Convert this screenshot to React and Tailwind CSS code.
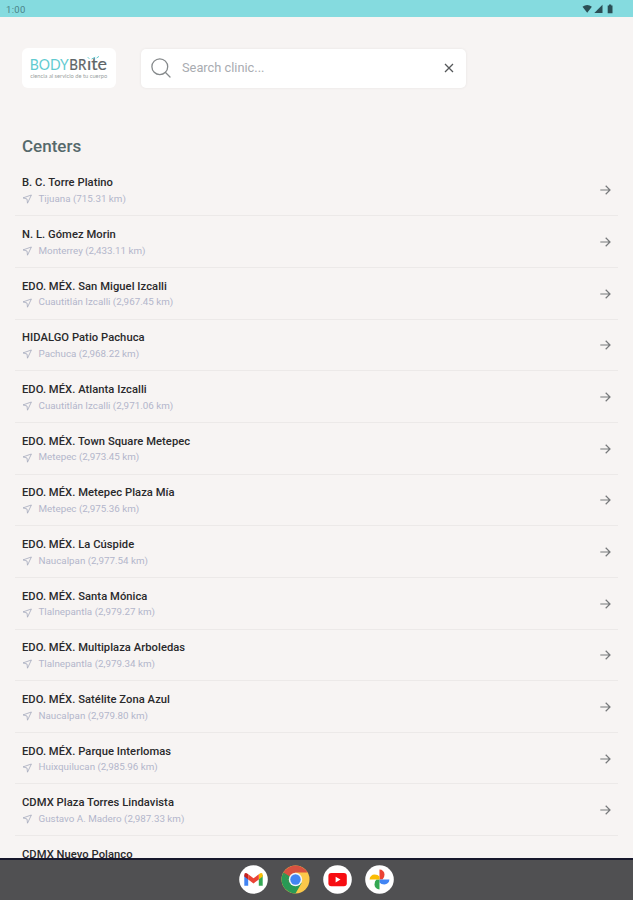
import React from "react";

const centers = [
  ["B. C. Torre Platino", "Tijuana (715.31 km)"],
  ["N. L. Gómez Morin", "Monterrey (2,433.11 km)"],
  ["EDO. MÉX. San Miguel Izcalli", "Cuautitlán Izcalli (2,967.45 km)"],
  ["HIDALGO Patio Pachuca", "Pachuca (2,968.22 km)"],
  ["EDO. MÉX. Atlanta Izcalli", "Cuautitlán Izcalli (2,971.06 km)"],
  ["EDO. MÉX. Town Square Metepec", "Metepec (2,973.45 km)"],
  ["EDO. MÉX. Metepec Plaza Mía", "Metepec (2,975.36 km)"],
  ["EDO. MÉX. La Cúspide", "Naucalpan (2,977.54 km)"],
  ["EDO. MÉX. Santa Mónica", "Tlalnepantla (2,979.27 km)"],
  ["EDO. MÉX. Multiplaza Arboledas", "Tlalnepantla (2,979.34 km)"],
  ["EDO. MÉX. Satélite Zona Azul", "Naucalpan (2,979.80 km)"],
  ["EDO. MÉX. Parque Interlomas", "Huixquilucan (2,985.96 km)"],
  ["CDMX Plaza Torres Lindavista", "Gustavo A. Madero (2,987.33 km)"],
];

function StatusBar() {
  return (
    <header className="flex h-[17px] shrink-0 items-center justify-between bg-[#85dbdf] pr-[18px] pl-1.5 text-[#2b4e55]">
      <span className="pt-0.5 text-[9.5px] leading-none tracking-[0.3px] text-[#4b8388]">1:00</span>
      <svg className="mt-px h-[10px] w-[33px]" viewBox="0 0 33 10" fill="currentColor">
        <path d="M0.5 2.7Q5.2-.6 9.9 2.7L5.2 8.8Z" />
        <path d="M20.5 0.8V9H12.3Z" />
        <path d="M25.7 1.5h1.3V.4h2.2v1.1h1.3V9.2h-4.8Z" />
      </svg>
    </header>
  );
}

function Logo() {
  return (
    <div className="flex h-10 w-[94px] items-center justify-center rounded-md bg-white">
      <svg className="h-10 w-[94px]" viewBox="0 0 94 40">
        <g fontFamily="Lato, sans-serif" fontSize="14.6">
          <text x="7.8" y="22.3" fill="#62cbd0" textLength="39" lengthAdjust="spacingAndGlyphs">BODY</text>
          <text x="47.3" y="22.3" fill="#5e6568" stroke="#5e6568" strokeWidth="0.2" textLength="17" lengthAdjust="spacingAndGlyphs">BR</text>
          <text x="65" y="22.3" fill="#5e6568" stroke="#5e6568" strokeWidth="0.2" fontSize="17" textLength="20" lengthAdjust="spacingAndGlyphs">ıte</text>
        </g>
        <path d="M65.8 9.2l1.5 1.6M69.6 11l3.6-1.8M74.6 10l2.4-1.6" stroke="#62cbd0" strokeWidth="1" />
        <text x="8.2" y="30.3" fill="#9a9fa1" fontFamily="Lato, sans-serif" fontSize="5.3" textLength="77" lengthAdjust="spacingAndGlyphs">ciencia al servicio de tu cuerpo</text>
      </svg>
    </div>
  );
}

function SearchBox() {
  return (
    <div className="flex h-[39px] w-[325px] items-center rounded-[5px] bg-white pr-3 pl-[10px] shadow-[0_0_3px_rgba(0,0,0,0.07)]">
      <svg className="size-5 shrink-0" viewBox="0 0 20 20" fill="none" stroke="#85898b" strokeWidth="1.3" strokeLinecap="round">
        <circle cx="8.8" cy="8.7" r="7.9" />
        <path d="M14.5 14.5L19 19" />
      </svg>
      <span className="ml-[11px] flex-1 text-[12.8px] text-[#a9acb1]">Search clinic...</span>
      <svg className="size-[10px]" viewBox="0 0 10 10" fill="none" stroke="#55585a" strokeWidth="1.3">
        <path d="M1 1L9 9M9 1L1 9" />
      </svg>
    </div>
  );
}

function CenterName({ children }) {
  return (
    <div className="text-[11.2px] leading-4 font-medium tracking-[0.05px] whitespace-nowrap text-[#29292b]">
      {children}
    </div>
  );
}

function CenterRow({ name, place }) {
  return (
    <li className="flex h-[51.67px] shrink-0 items-center justify-between border-b border-[#ece9e8] px-[7px]">
      <div className="pt-[3px]">
        <CenterName>{name}</CenterName>
        <div className="flex h-4 items-center text-[9.8px] whitespace-nowrap text-[#b3b6cb]">
          <svg className="mr-[6.5px] size-[10px]" viewBox="0 0 10 10" fill="none" stroke="#a5aabd" strokeWidth="0.8" strokeLinejoin="round">
            <path d="M9.4 1L1 3.9L5 5L5.5 9.2Z" />
          </svg>
          {place}
        </div>
      </div>
      <svg className="mt-px h-[10px] w-[11px]" viewBox="0 0 11 10" fill="none" stroke="#77797b" strokeWidth="1.2">
        <path d="M0.3 5H10M5.7 0.8L10 5L5.7 9.2" />
      </svg>
    </li>
  );
}

function Gmail() {
  return (
    <svg className="size-[29px]" viewBox="0 0 29 29">
      <circle cx="14.5" cy="14.5" r="14.3" fill="#fff" />
      <path d="M5.3 9.8V20.8H9.2V12.5Z" fill="#4285f4" />
      <path d="M23.7 9.8V20.8H19.8V12.5Z" fill="#34a853" />
      <path d="M19.8 9.3L21.2 8.3Q23.7 7.3 23.7 10V11.4L19.8 14.4Z" fill="#fbbc04" />
      <path d="M9.2 9.3L7.8 8.3Q5.3 7.3 5.3 10V11.4L9.2 14.4Z" fill="#c5221f" />
      <path d="M9.2 9.3L14.5 13.3L19.8 9.3V14.4L14.5 18.4L9.2 14.4Z" fill="#ea4335" />
    </svg>
  );
}

function Chrome() {
  return (
    <svg className="size-[29px]" viewBox="0 0 29 29">
      <circle cx="14.5" cy="14.5" r="14" fill="#fbc84a" />
      <path d="M2.4 7.5A14 14 0 0 0 14.5 28.5L20.6 18L14.5 14.5Z" fill="#299a55" />
      <path d="M2.4 7.5A14 14 0 0 1 26.6 7.5H14.5L8.4 18Z" fill="#d85140" />
      <path d="M2.4 7.5L8.4 18L14.5 14.5L8 11Z" fill="#299a55" />
      <circle cx="14.5" cy="14.5" r="6.7" fill="#f1f5fa" />
      <circle cx="14.5" cy="14.5" r="5.2" fill="#4285f4" />
    </svg>
  );
}

function YouTube() {
  return (
    <svg className="size-[29px]" viewBox="0 0 29 29">
      <circle cx="14.5" cy="14.5" r="14.3" fill="#fff" />
      <rect x="5.4" y="8" width="18.4" height="13.2" rx="3" fill="#f70d12" />
      <path d="M12.6 11.7L17.5 14.6L12.6 17.5Z" fill="#fff" />
    </svg>
  );
}

function Photos() {
  return (
    <svg className="size-[29px]" viewBox="0 0 29 29">
      <circle cx="14.5" cy="14.5" r="14.3" fill="#fff" />
      <path d="M14.5 14.5V4.6A5 5 0 0 1 19.5 9.6Q19.5 13 17.5 14.5Z" fill="#ea4335" />
      <path d="M14.5 14.5H24.4A5 5 0 0 1 19.4 19.5Q16 19.5 14.5 17.5Z" fill="#4285f4" />
      <path d="M14.5 14.5V24.4A5 5 0 0 1 9.5 19.4Q9.5 16 11.5 14.5Z" fill="#34a853" />
      <path d="M14.5 14.5H4.6A5 5 0 0 1 9.6 9.5Q13 9.5 14.5 11.5Z" fill="#fbbc04" />
    </svg>
  );
}

export default function App() {
  return (
    <div className="flex h-[900px] w-[633px] flex-col overflow-hidden bg-[#f7f4f3] font-[Roboto,sans-serif]">
      <StatusBar />
      <main className="flex min-h-0 flex-1 flex-col overflow-hidden">
        <div className="flex shrink-0 items-center gap-[25px] pt-[31px] pl-[22px]">
          <Logo />
          <SearchBox />
        </div>
        <h1 className="mt-[46px] shrink-0 pl-[22px] text-[17px] leading-6 font-medium text-[#56696b]">Centers</h1>
        <ul className="mt-[6.6px] flex flex-col px-[15px]">
          {centers.map(([name, place]) => (
            <CenterRow key={name} name={name} place={place} />
          ))}
          <li className="shrink-0 px-[7px] pt-[11px]">
            <CenterName>CDMX Nuevo Polanco</CenterName>
          </li>
        </ul>
      </main>
      <nav className="flex h-[42px] shrink-0 items-center justify-center gap-[13.3px] border-t-2 border-[#17172b] bg-[#505052] pb-[2px]">
        <Gmail />
        <Chrome />
        <YouTube />
        <Photos />
      </nav>
    </div>
  );
}
